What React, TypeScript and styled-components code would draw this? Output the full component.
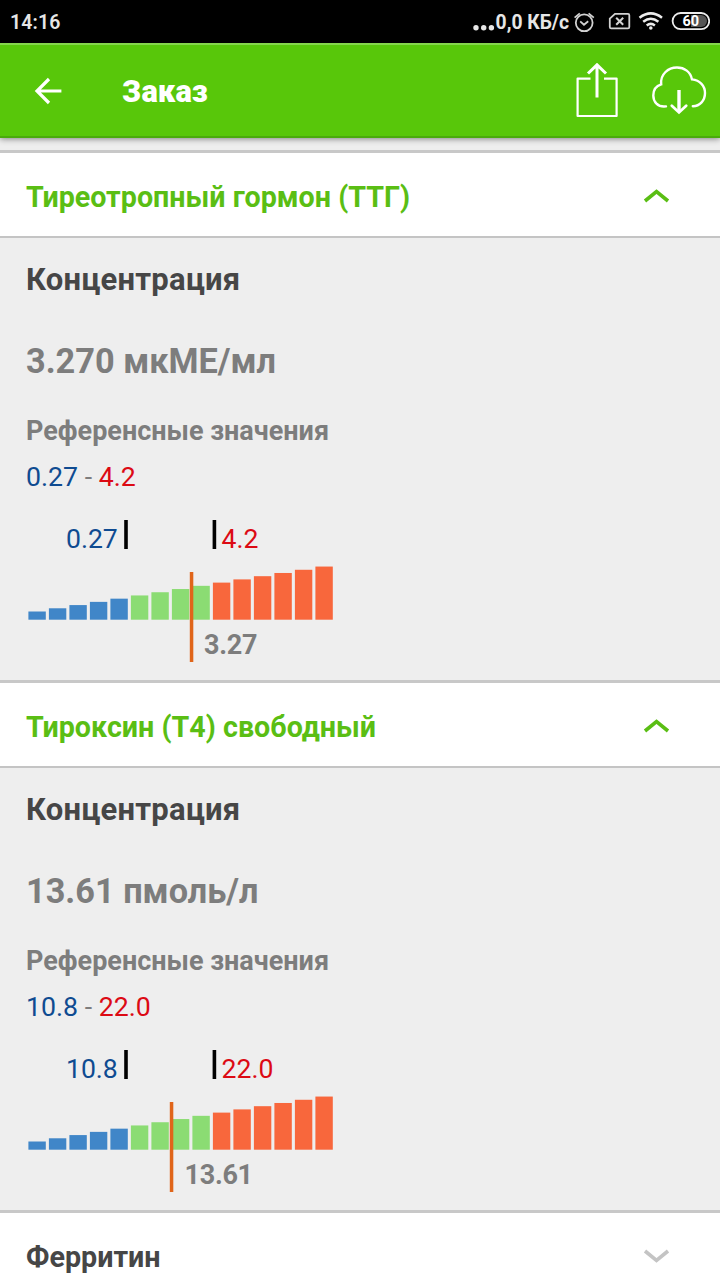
import React from "react";
import styled, { createGlobalStyle } from "styled-components";

const GlobalStyle = createGlobalStyle`
  * { box-sizing: border-box; }
  body {
    margin: 0;
    background: #eeeeee;
    font-family: Roboto, "Liberation Sans", sans-serif;
    overflow: hidden;
  }
`;

const Screen = styled.div`
  width: 720px;
  height: 1280px;
  overflow: hidden;
  display: flex;
  flex-direction: column;
  background: #eeeeee;
`;

const StatusBar = styled.div`
  height: 43px;
  flex: none;
  background: #000;
  color: #e6e6e6;
  display: flex;
  align-items: center;
  justify-content: space-between;
  padding: 1px 10px 0 10px;
  font-size: 19.5px;
  font-weight: 500;
  line-height: 24px;
`;

const Clock = styled.span`
  font-weight: 600;
  letter-spacing: 0.1px;
  padding-top: 2px;
`;

const StatusInfo = styled.div`
  display: flex;
  align-items: center;
`;

const Speed = styled.span`
  font-weight: 700;
  font-size: 19.3px;
  padding: 1px 1px 0 0;
  white-space: nowrap;
`;

const StatusIcons = styled.svg`
  display: block;
  width: 140px;
  height: 28px;
`;

const AppBar = styled.header`
  position: relative;
  height: 95px;
  flex: none;
  display: flex;
  align-items: center;
  background: #58c70a;
  border-top: 2px solid #85d64c;
  border-bottom: 2px solid #4aab0c;
  box-shadow: 0 1px 6px rgba(0, 0, 0, 0.45);
  padding: 0 13px 0 33px;
`;

const AppTitle = styled.h1`
  margin: 0 auto 0 60px;
  padding-top: 3px;
  color: #fff;
  font-size: 30.8px;
  font-weight: 900;
  line-height: 40px;
`;

const Icon = styled.svg`
  display: block;
  flex: none;
  fill: none;
`;

const List = styled.main`
  padding-top: 12px;
  flex: none;
`;

const SectionHeader = styled.div<{ $open: boolean }>`
  height: 88px;
  display: flex;
  align-items: center;
  justify-content: space-between;
  background: #fff;
  border-top: 3px solid #c8c8c8;
  border-bottom: 2px solid #c4c4c4;
  padding: 4px 49px 0 26px;
  color: ${(p) => (p.$open ? "#5abe14" : "#464646")};
`;

const SectionTitle = styled.h2`
  margin: 0;
  padding-top: 1px;
  font-size: 28.7px;
  font-weight: 700;
  line-height: 36px;
  white-space: nowrap;
`;

const Panel = styled.section`
  height: 442px;
  padding: 22px 26px 0;
  background: #eeeeee;
  color: #7d7d7d;
`;

const Label = styled.h3`
  margin: 0 0 41px;
  color: #464646;
  font-size: 31px;
  font-weight: 700;
  line-height: 40px;
  letter-spacing: 0.25px;
`;

const Value = styled.p`
  margin: 0 0 32px;
  font-size: 34.3px;
  font-weight: 700;
  line-height: 40px;
`;

const RefLabel = styled.p`
  margin: 0 0 10px;
  font-size: 27px;
  font-weight: 700;
  line-height: 36px;
`;

const Range = styled.p`
  margin: 0 0 25px;
  font-size: 26.7px;
  line-height: 36px;
`;

const Bound = styled.span<{ $high?: boolean }>`
  color: ${(p) => (p.$high ? "#dc0a14" : "#0f4b91")};
`;

const Chart = styled.svg`
  display: block;
  width: 320px;
  height: 142px;
  font-size: 26.6px;
`;

type Result = {
  title: string;
  value: string;
  low: string;
  high: string;
  mark: string;
  markX: number;
  markLabelX: number;
};

const results: Result[] = [
  { title: "Тиреотропный гормон (ТТГ)", value: "3.270 мкМЕ/мл", low: "0.27", high: "4.2", mark: "3.27", markX: 163.8, markLabelX: 178 },
  { title: "Тироксин (Т4) свободный", value: "13.61 пмоль/л", low: "10.8", high: "22.0", mark: "13.61", markX: 143.8, markLabelX: 158.5 },
];

const barColor = (i: number) => (i < 5 ? "#4086c8" : i < 9 ? "#8bdc73" : "#f8673c");

function LevelChart({ result }: { result: Result }) {
  return (
    <Chart viewBox="0 0 320 142">
      <text x="91.8" y="28" textAnchor="end" fill="#0f4b91">{result.low}</text>
      <rect x="98.2" y="0" width="3.6" height="29" fill="#000" />
      <rect x="186.6" y="0" width="3.6" height="29" fill="#000" />
      <text x="195.6" y="28" fill="#dc0a14">{result.high}</text>
      {Array.from({ length: 15 }, (_, i) => {
        const h = 8.2 + i * 3.21;
        return <rect key={i} x={2.4 + i * 20.5} y={99.7 - h} width={17.4} height={h} fill={barColor(i)} />;
      })}
      <rect x={result.markX} y="52" width="3.5" height="90" fill="#e0651a" />
      <text x={result.markLabelX} y="134" fill="#7d7d7d" fontSize="27" letterSpacing="-0.3" fontWeight="700">{result.mark}</text>
    </Chart>
  );
}

function Chevron({ open }: { open: boolean }) {
  return (
    <Icon width="28" height="18" viewBox="0 0 28 18" stroke={open ? "#5abe14" : "#c4c4c4"} strokeWidth="3.6">
      <path d={open ? "M2 13 L13.5 3.5 L25 13" : "M2 3 L13.5 12.5 L25 3"} />
    </Icon>
  );
}

export default function App() {
  return (
    <Screen>
      <GlobalStyle />
      <StatusBar>
        <Clock>14:16</Clock>
        <StatusInfo>
          <Icon width="24" height="28" viewBox="0 0 24 28">
            <g fill="#e6e6e6">
              <circle cx="4" cy="19.8" r="2.7" />
              <circle cx="11.7" cy="19.8" r="2.7" />
              <circle cx="19.4" cy="19.8" r="2.7" />
            </g>
          </Icon>
          <Speed>0,0 КБ/с</Speed>
          <StatusIcons viewBox="570 8 140 28" fill="none" stroke="#d2d2d2" strokeWidth="1.8">
            <circle cx="584.2" cy="22.8" r="8.4" />
            <path d="M580.2 21.3 L584 24.7 L588.2 21.3 M574.6 17.6 L579.8 13.4 M588.6 13.4 L593.8 17.6" />
            <path d="M615 13.8 H628 Q629.3 13.8 629.3 15.2 V27 Q629.3 28.4 628 28.4 H611.3 Q609.8 28.4 609.8 27 V18.7 Z" />
            <path d="M616.2 17.8 L623.2 24.8 M623.2 17.8 L616.2 24.8" strokeWidth="2" />
            <path d="M639.5 17.7 Q650.8 9 662 17.7 M643.2 21.7 Q650.8 15.8 658.4 21.7 M646.7 25.4 Q650.8 22.3 654.9 25.4" stroke="#ececec" strokeWidth="2.5" />
            <circle cx="650.8" cy="28" r="1.8" fill="#ececec" stroke="none" />
            <path d="M691 15 H701 A6 6 0 0 1 701 27 H691 Z" fill="#555" stroke="none" />
            <rect x="672.6" y="13" width="36.6" height="16.2" rx="8.1" stroke="#ececec" />
            <text x="690.8" y="26.3" textAnchor="middle" fontSize="14.5" fontWeight="700" fill="#fff" stroke="none">60</text>
          </StatusIcons>
        </StatusInfo>
      </StatusBar>
      <AppBar>
        <Icon width="29" height="28" viewBox="0 0 29 28" stroke="#fff" strokeWidth="3.2">
          <path d="M16 2 L4 14 L16 26 M3.6 14 H28.4" />
        </Icon>
        <AppTitle>Заказ</AppTitle>
        <Icon width="44" height="56" viewBox="575 63 44 56" stroke="#fff" strokeWidth="2.2" strokeLinejoin="round">
          <path d="M590.5 78.6 H577.6 V116 H616.6 V78.6 H604" />
          <path d="M597 97.5 V65.5 M588 73.5 L597 64.8 L606 73.5" strokeWidth="3" strokeLinejoin="miter" />
        </Icon>
        <Icon width="88" height="56" viewBox="619 63 88 56" stroke="#fff" strokeWidth="2.4" strokeLinecap="round">
          <path d="M666 106.4 C657.5 107.5 653.3 101.5 653.3 95.5 C653.3 89.5 656.5 85.7 661.2 84.3 C660 74.5 668 67.5 677 67.5 C684.5 67.5 690.5 72 692 79.4 C700 80.2 705 86 705 93 C705 100.5 700 106 692.8 106.3" />
          <path d="M679 90 V111.5" strokeWidth="3.4" strokeLinecap="butt" />
          <path d="M671.8 105.7 L679 112.4 L686.2 105.7" strokeWidth="2.8" />
        </Icon>
      </AppBar>
      <List>
        {results.map((r) => (
          <React.Fragment key={r.title}>
            <SectionHeader $open>
              <SectionTitle>{r.title}</SectionTitle>
              <Chevron open />
            </SectionHeader>
            <Panel>
              <Label>Концентрация</Label>
              <Value>{r.value}</Value>
              <RefLabel>Референсные значения</RefLabel>
              <Range>
                <Bound>{r.low}</Bound> - <Bound $high>{r.high}</Bound>
              </Range>
              <LevelChart result={r} />
            </Panel>
          </React.Fragment>
        ))}
        <SectionHeader $open={false}>
          <SectionTitle>Ферритин</SectionTitle>
          <Chevron open={false} />
        </SectionHeader>
      </List>
    </Screen>
  );
}
